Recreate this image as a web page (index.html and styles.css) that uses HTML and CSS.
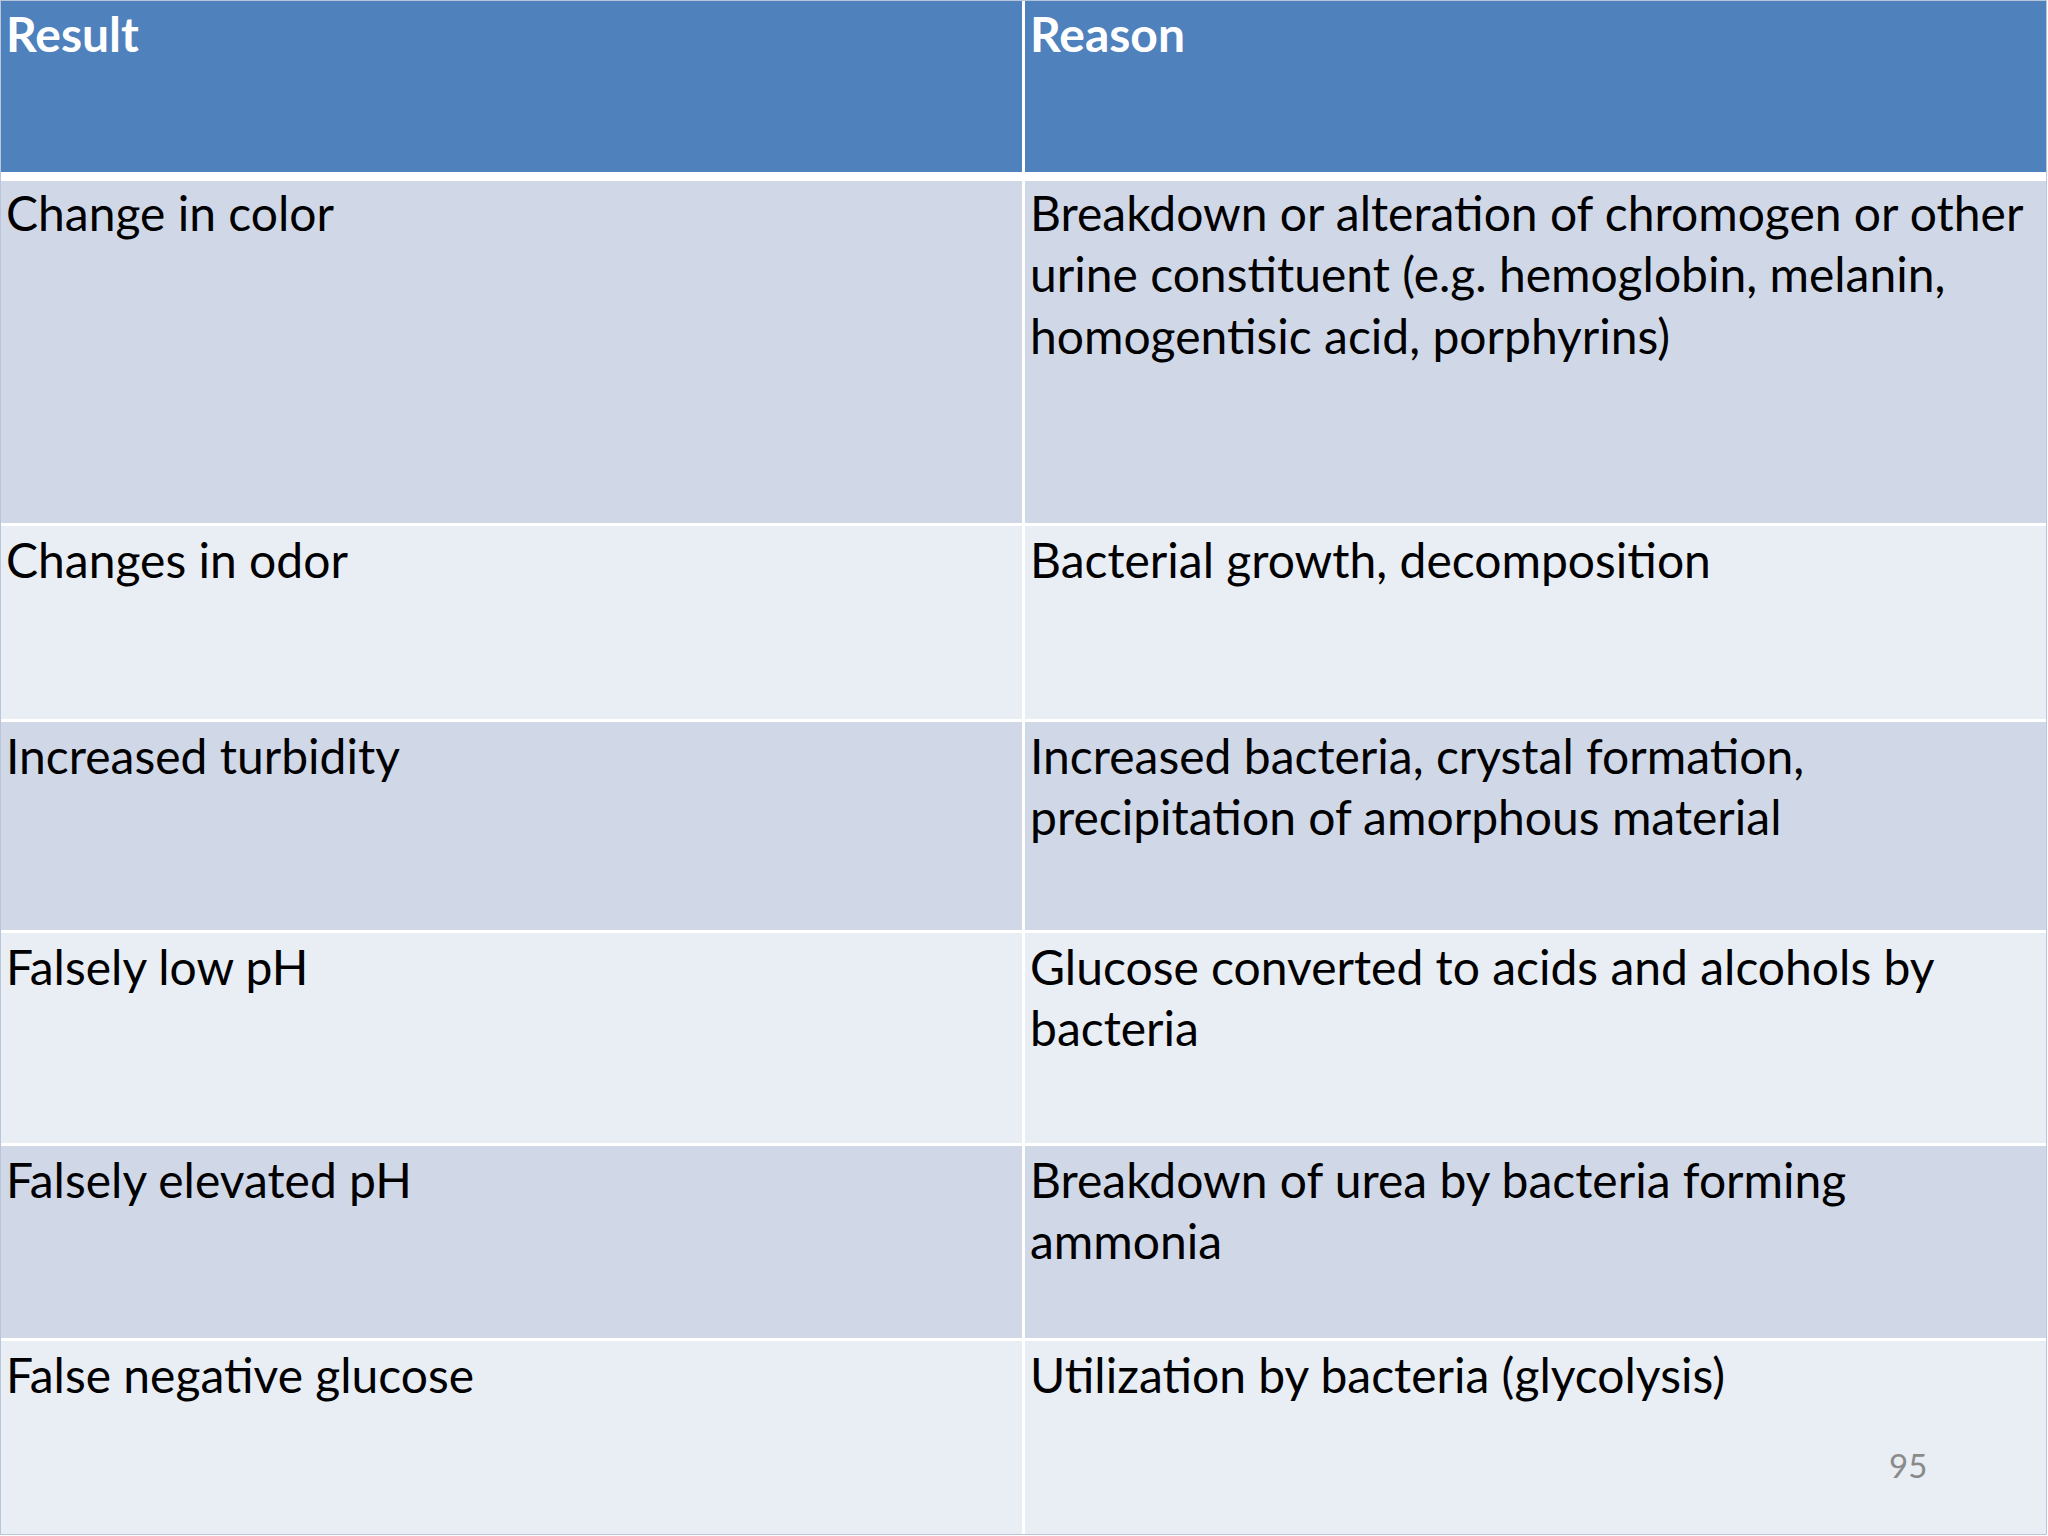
FILE: index.html
```html
<!DOCTYPE html>
<html lang="en">
<head>
<meta charset="utf-8">
<title>Urine specimen changes</title>
<link rel="stylesheet" href="styles.css">
</head>
<body>
<div class="slide">
  <div class="table">
    <div class="cell head">Result</div>
    <div class="cell head">Reason</div>

    <div class="cell band1 first">Change in color</div>
    <div class="cell band1 first">Breakdown or alteration of chromogen or other urine constituent (e.g. hemoglobin, melanin, homogentisic acid, porphyrins)</div>

    <div class="cell band2">Changes in odor</div>
    <div class="cell band2">Bacterial growth, decomposition</div>

    <div class="cell band1">Increased turbidity</div>
    <div class="cell band1">Increased bacteria, crystal formation, precipitation of amorphous material</div>

    <div class="cell band2">Falsely low pH</div>
    <div class="cell band2">Glucose converted to acids and alcohols by bacteria</div>

    <div class="cell band1">Falsely elevated pH</div>
    <div class="cell band1">Breakdown of urea by bacteria forming ammonia</div>

    <div class="cell band2">False negative glucose</div>
    <div class="cell band2">Utilization by bacteria (glycolysis)</div>
  </div>
  <div class="page-num">95</div>
</div>
</body>
</html>
```

FILE: styles.css
```css
html, body {
  margin: 0;
  padding: 0;
  background: #ffffff;
}

.slide {
  position: relative;
  width: 2048px;
  height: 1536px;
  padding: 1px 0 0 1px;
  box-sizing: border-box;
  font-family: "Lato", "Liberation Sans", sans-serif;
}

.table {
  display: grid;
  grid-template-columns: 1021px 1021px;
  grid-template-rows: 171px 348px 193px 208px 210px 192px 193px;
  column-gap: 3px;
  row-gap: 3px;
  width: 2045px;
  background: #ffffff;
  outline: 1px solid #b8c5da;
}

.cell {
  font-size: 48px;
  line-height: 61.4px;
  color: #000000;
  padding: 3px 8px 0 5px;
}

.head {
  background: #4f81bd;
  color: #ffffff;
  font-weight: 700;
  padding-top: 2px;
}

.first {
  margin-top: 6px;
  padding-top: 1px;
}

.band1 {
  background: #d0d8e8;
}

.band2 {
  background: #e9edf4;
}

.page-num {
  position: absolute;
  left: 1889px;
  top: 1445px;
  font-size: 33px;
  line-height: 40px;
  color: #8a8a8a;
}
```
